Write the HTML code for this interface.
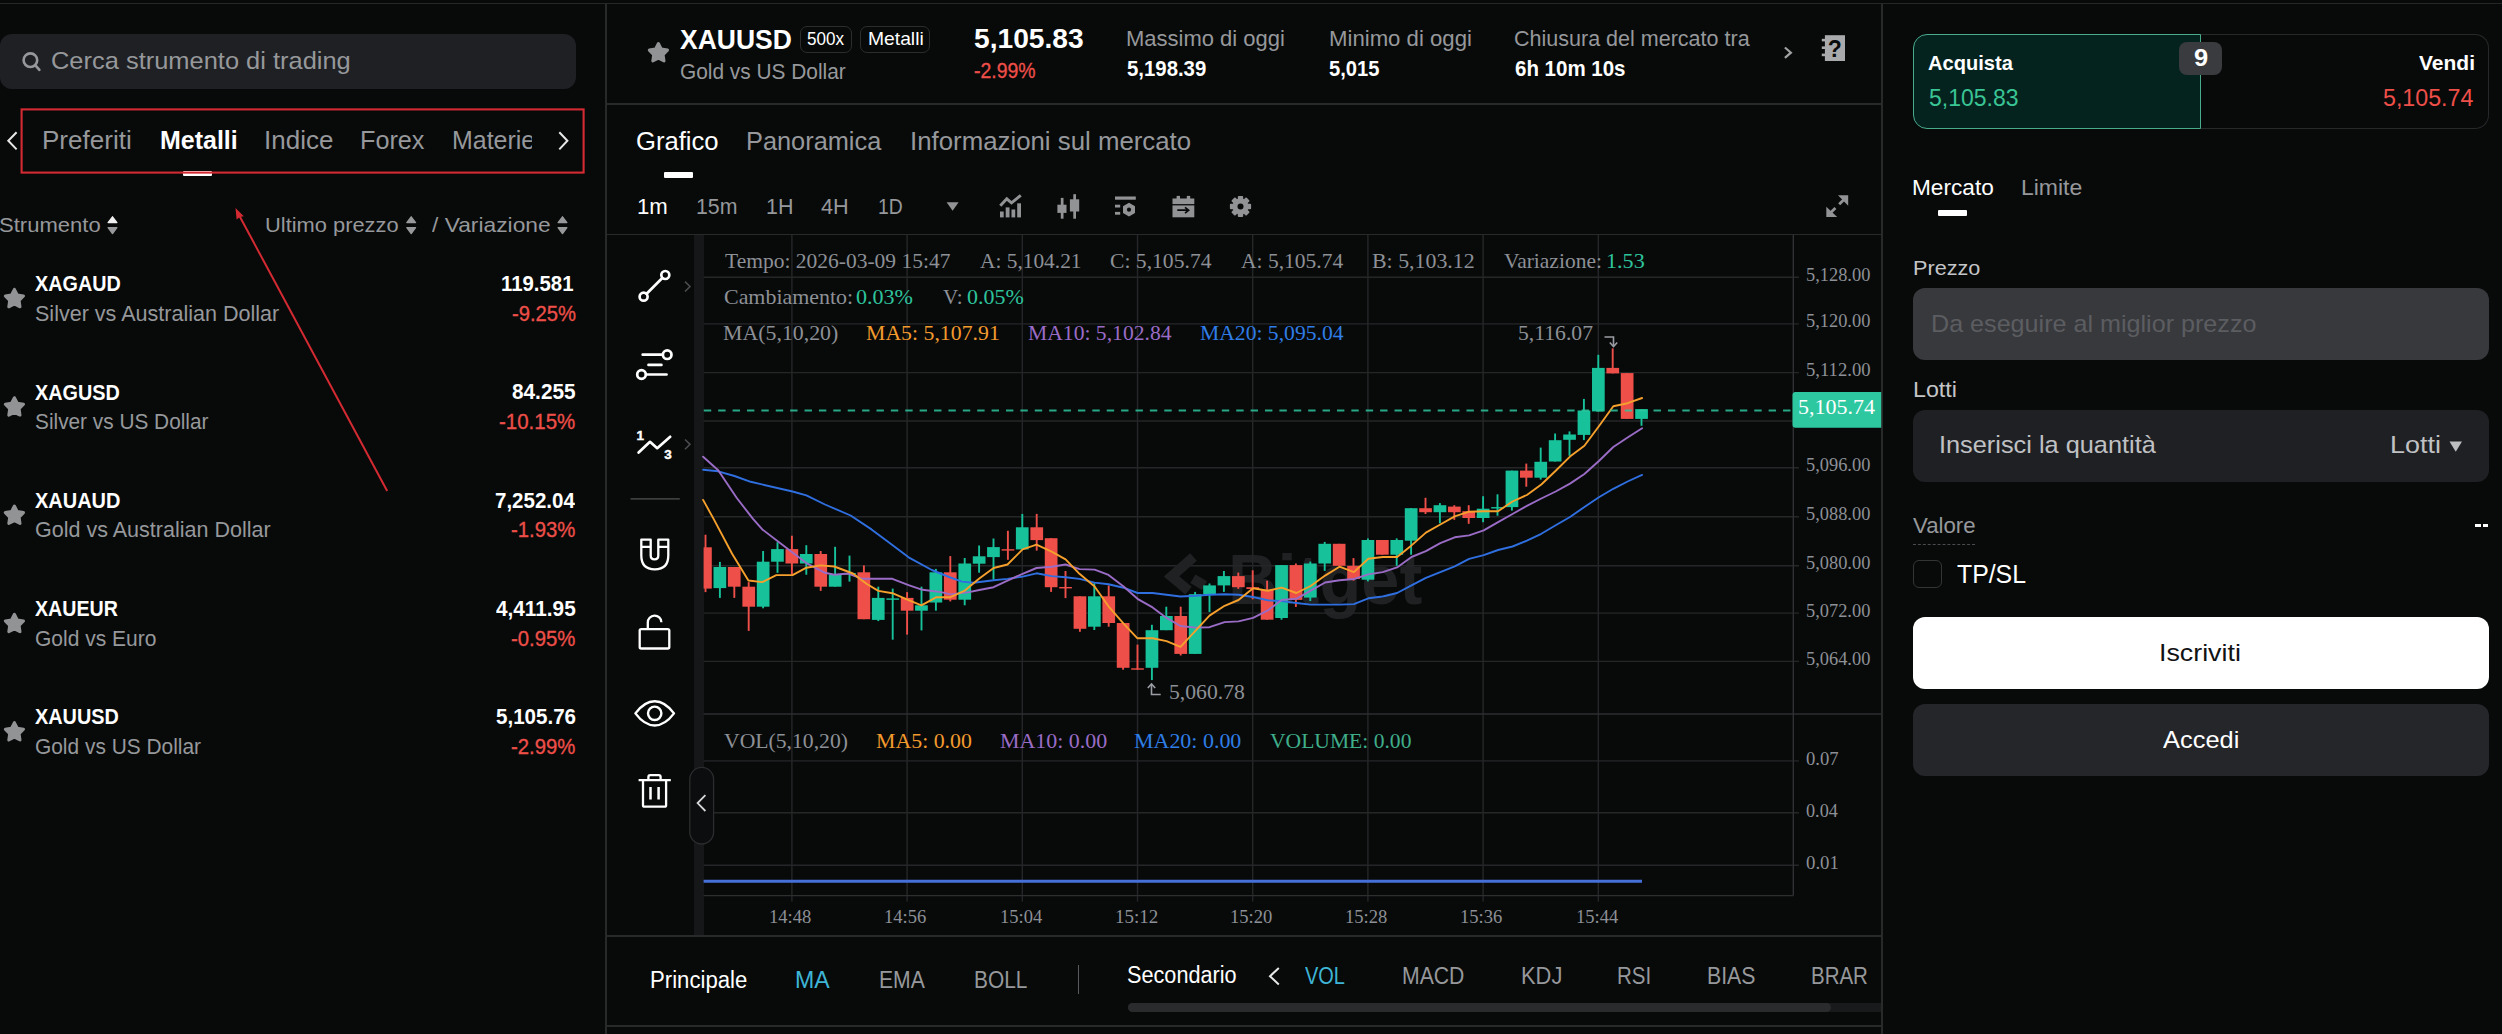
<!DOCTYPE html>
<html lang="it"><head><meta charset="utf-8"><title>XAUUSD</title>
<style>
html,body{margin:0;padding:0;background:#080a0a;}
body{width:2502px;height:1034px;position:relative;overflow:hidden;font-family:"Liberation Sans",sans-serif;}
.t{position:absolute;white-space:nowrap;transform-origin:left center;display:block;}
.b{position:absolute;box-sizing:border-box;}
svg{position:absolute;left:0;top:0;}

</style></head>
<body>
<div class="b" style="left:0.0px;top:2.9px;width:2502.0px;height:1.4px;background:#252727"></div>
<div class="b" style="left:605.3px;top:4.0px;width:1.7px;height:1030.0px;background:#282a2a"></div>
<div class="b" style="left:1881.0px;top:4.0px;width:1.7px;height:1030.0px;background:#282a2a"></div>
<div class="b" style="left:607.0px;top:103.4px;width:1274.0px;height:1.6px;background:#282a2a"></div>
<div class="b" style="left:607.0px;top:233.5px;width:1274.0px;height:1.5px;background:#282a2a"></div>
<div class="b" style="left:607.0px;top:935.4px;width:1274.0px;height:1.6px;background:#282a2a"></div>
<div class="b" style="left:607.0px;top:1025.2px;width:1274.0px;height:1.6px;background:#282a2a"></div>
<div class="b" style="left:0.0px;top:34.0px;width:576.0px;height:55.3px;background:#1f2023;border-radius:12px"></div>
<div class="b" style="left:799.7px;top:25.5px;width:52.7px;height:27.6px;border:1.3px solid #2b2c2e;border-radius:7px"></div>
<div class="b" style="left:860.3px;top:25.5px;width:69.6px;height:27.6px;border:1.3px solid #2b2c2e;border-radius:7px"></div>
<div class="b" style="left:183.0px;top:171.0px;width:29.0px;height:5.0px;background:#fff;border-radius:1px"></div>
<div class="b" style="left:664.1px;top:172.2px;width:28.7px;height:5.6px;background:#fff;border-radius:1px"></div>
<div class="b" style="left:1937.8px;top:210.0px;width:29.5px;height:5.7px;background:#fff;border-radius:1px"></div>
<div class="b" style="left:2199.0px;top:34.0px;width:290.0px;height:94.7px;border:1.3px solid #27282a;border-left:none;border-radius:0 14px 14px 0"></div>
<div class="b" style="left:1913.2px;top:34.0px;width:287.4px;height:94.7px;background:#04231f;border:1.4px solid #4aab8c;border-radius:14px 0 0 14px"></div>
<div class="b" style="left:2179.2px;top:41.5px;width:43.3px;height:33.2px;background:#3a3b3e;border-radius:8px"></div>
<div class="b" style="left:1913.2px;top:288.3px;width:575.8px;height:71.4px;background:#38393d;border-radius:12px"></div>
<div class="b" style="left:1913.2px;top:410.4px;width:575.8px;height:71.3px;background:#1f2023;border-radius:12px"></div>
<div class="b" style="left:1913.0px;top:544.0px;width:62.0px;height:1.3px;border-top:1.3px dashed #4a4b4e"></div>
<div class="b" style="left:2475.0px;top:523.8px;width:5.6px;height:3.0px;background:#fff"></div>
<div class="b" style="left:2482.6px;top:523.8px;width:5.8px;height:3.0px;background:#fff"></div>
<div class="b" style="left:1913.0px;top:560.4px;width:29.0px;height:27.4px;border:1.3px solid #333436;border-radius:6px"></div>
<div class="b" style="left:1913.0px;top:616.8px;width:576.1px;height:72.0px;background:#fff;border-radius:12px"></div>
<div class="b" style="left:1913.0px;top:703.7px;width:576.1px;height:72.0px;background:#25262a;border-radius:12px"></div>
<div class="b" style="left:1077.7px;top:965.4px;width:1.5px;height:29.0px;background:#5a5b5e"></div>
<div class="b" style="left:1128.3px;top:1002.7px;width:752.7px;height:9.3px;background:#191a1b;border-radius:5px 0 0 5px"></div>
<div class="b" style="left:1128.3px;top:1002.7px;width:703.2px;height:9.3px;background:#2a2b2d;border-radius:5px"></div>
<div class="b" style="left:693.7px;top:235.0px;width:9.9px;height:700.4px;background:#161718"></div>
<span class="t" style='left:1228.3px;top:544.7px;font:700 70px/1 "Liberation Sans", sans-serif;color:#202123;transform:scaleX(0.9796);'>Bitget</span>
<svg width="2502" height="1034" viewBox="0 0 2502 1034">
<path d="M791.9 235V901.5" stroke="#252628" stroke-width="1.4"/>
<path d="M907.1 235V901.5" stroke="#252628" stroke-width="1.4"/>
<path d="M1022.3 235V901.5" stroke="#252628" stroke-width="1.4"/>
<path d="M1137.5 235V901.5" stroke="#252628" stroke-width="1.4"/>
<path d="M1252.7 235V901.5" stroke="#252628" stroke-width="1.4"/>
<path d="M1367.9 235V901.5" stroke="#252628" stroke-width="1.4"/>
<path d="M1483.1 235V901.5" stroke="#252628" stroke-width="1.4"/>
<path d="M1598.3 235V901.5" stroke="#252628" stroke-width="1.4"/>
<path d="M703.6 277.2H1799" stroke="#252628" stroke-width="1.4"/>
<path d="M703.6 323.9H1799" stroke="#252628" stroke-width="1.4"/>
<path d="M703.6 372.6H1799" stroke="#252628" stroke-width="1.4"/>
<path d="M703.6 421.0H1799" stroke="#252628" stroke-width="1.4"/>
<path d="M703.6 467.7H1799" stroke="#252628" stroke-width="1.4"/>
<path d="M703.6 516.7H1799" stroke="#252628" stroke-width="1.4"/>
<path d="M703.6 565.7H1799" stroke="#252628" stroke-width="1.4"/>
<path d="M703.6 613.1H1799" stroke="#252628" stroke-width="1.4"/>
<path d="M703.6 661.4H1799" stroke="#252628" stroke-width="1.4"/>
<path d="M703.6 760.9H1799" stroke="#252628" stroke-width="1.4"/>
<path d="M703.6 812.7H1799" stroke="#252628" stroke-width="1.4"/>
<path d="M703.6 865.3H1799" stroke="#252628" stroke-width="1.4"/>
<path d="M703.6 714H1881" stroke="#2d2e30" stroke-width="1.4"/>
<path d="M703.6 895.6H1793.5" stroke="#2d2e30" stroke-width="1.4"/>
<path d="M1793.3 235V895.6" stroke="#303133" stroke-width="1.4"/>
<g fill="none" stroke="#202123" stroke-width="10" stroke-linejoin="miter"><path d="M1193.5 557 L1171.5 576.4 L1188.5 590.6"/><path d="M1192.9 578.7L1204.5 585.6"/></g>
<path d="M705.5 534.7V592.1" stroke="#ef4f49" stroke-width="1.9"/>
<rect x="703.6" y="547.3" width="8.2" height="41.3" fill="#ef4f49"/>
<path d="M719.9 561.9V597.9" stroke="#17c29b" stroke-width="1.9"/>
<rect x="713.5" y="567.0" width="12.7" height="21.1" fill="#17c29b"/>
<path d="M734.3 567.0V597.9" stroke="#ef4f49" stroke-width="1.9"/>
<rect x="727.9" y="567.0" width="12.7" height="19.7" fill="#ef4f49"/>
<path d="M748.7 582.1V630.9" stroke="#ef4f49" stroke-width="1.9"/>
<rect x="742.4" y="586.7" width="12.7" height="20.0" fill="#ef4f49"/>
<path d="M763.1 551.0V608.3" stroke="#17c29b" stroke-width="1.9"/>
<rect x="756.8" y="561.7" width="12.7" height="45.0" fill="#17c29b"/>
<path d="M777.5 542.2V572.8" stroke="#17c29b" stroke-width="1.9"/>
<rect x="771.1" y="549.1" width="12.7" height="12.6" fill="#17c29b"/>
<path d="M791.9 535.7V574.7" stroke="#ef4f49" stroke-width="1.9"/>
<rect x="785.5" y="549.1" width="12.7" height="14.4" fill="#ef4f49"/>
<path d="M806.3 545.2V574.7" stroke="#17c29b" stroke-width="1.9"/>
<rect x="799.9" y="554.0" width="12.7" height="9.5" fill="#17c29b"/>
<path d="M820.7 551.0V590.9" stroke="#ef4f49" stroke-width="1.9"/>
<rect x="814.4" y="554.0" width="12.7" height="32.7" fill="#ef4f49"/>
<path d="M835.1 546.8V586.7" stroke="#17c29b" stroke-width="1.9"/>
<rect x="828.8" y="574.7" width="12.7" height="12.0" fill="#17c29b"/>
<path d="M849.5 555.6V581.6" stroke="#17c29b" stroke-width="1.9"/>
<rect x="843.1" y="573.0" width="12.7" height="1.4" fill="#17c29b"/>
<path d="M863.9 565.4V619.2" stroke="#ef4f49" stroke-width="1.9"/>
<rect x="857.5" y="572.3" width="12.7" height="46.9" fill="#ef4f49"/>
<path d="M878.3 586.7V621.1" stroke="#17c29b" stroke-width="1.9"/>
<rect x="871.9" y="597.9" width="12.7" height="22.0" fill="#17c29b"/>
<path d="M892.7 588.6V639.7" stroke="#17c29b" stroke-width="1.9"/>
<rect x="886.4" y="598.4" width="12.7" height="1.4" fill="#17c29b"/>
<path d="M907.1 592.1V634.6" stroke="#ef4f49" stroke-width="1.9"/>
<rect x="900.8" y="597.9" width="12.7" height="12.8" fill="#ef4f49"/>
<path d="M921.5 586.7V630.4" stroke="#17c29b" stroke-width="1.9"/>
<rect x="915.1" y="605.3" width="12.7" height="5.4" fill="#17c29b"/>
<path d="M935.9 568.9V610.7" stroke="#17c29b" stroke-width="1.9"/>
<rect x="929.5" y="572.3" width="12.7" height="30.2" fill="#17c29b"/>
<path d="M950.3 556.1V601.4" stroke="#ef4f49" stroke-width="1.9"/>
<rect x="943.9" y="572.3" width="12.7" height="27.4" fill="#ef4f49"/>
<path d="M964.7 558.0V605.3" stroke="#17c29b" stroke-width="1.9"/>
<rect x="958.4" y="563.5" width="12.7" height="36.2" fill="#17c29b"/>
<path d="M979.1 545.5V572.7" stroke="#17c29b" stroke-width="1.9"/>
<rect x="972.8" y="556.3" width="12.7" height="7.4" fill="#17c29b"/>
<path d="M993.5 538.5V579.6" stroke="#17c29b" stroke-width="1.9"/>
<rect x="987.1" y="547.1" width="12.7" height="10.0" fill="#17c29b"/>
<path d="M1007.9 530.8V559.8" stroke="#ef4f49" stroke-width="1.9"/>
<rect x="1001.6" y="549.2" width="12.7" height="1.4" fill="#ef4f49"/>
<path d="M1022.3 513.9V549.4" stroke="#17c29b" stroke-width="1.9"/>
<rect x="1015.9" y="527.3" width="12.7" height="22.1" fill="#17c29b"/>
<path d="M1036.7 513.9V550.6" stroke="#ef4f49" stroke-width="1.9"/>
<rect x="1030.4" y="527.3" width="12.7" height="12.8" fill="#ef4f49"/>
<path d="M1051.1 538.2V591.9" stroke="#ef4f49" stroke-width="1.9"/>
<rect x="1044.8" y="538.2" width="12.7" height="49.0" fill="#ef4f49"/>
<path d="M1065.5 571.0V598.1" stroke="#ef4f49" stroke-width="1.9"/>
<rect x="1059.2" y="587.0" width="12.7" height="1.4" fill="#ef4f49"/>
<path d="M1079.9 596.3V631.8" stroke="#ef4f49" stroke-width="1.9"/>
<rect x="1073.6" y="596.3" width="12.7" height="32.5" fill="#ef4f49"/>
<path d="M1094.3 583.1V630.0" stroke="#17c29b" stroke-width="1.9"/>
<rect x="1088.0" y="596.3" width="12.7" height="30.4" fill="#17c29b"/>
<path d="M1108.7 585.4V626.7" stroke="#ef4f49" stroke-width="1.9"/>
<rect x="1102.4" y="596.3" width="12.7" height="26.7" fill="#ef4f49"/>
<path d="M1123.1 623.0V669.7" stroke="#ef4f49" stroke-width="1.9"/>
<rect x="1116.8" y="623.0" width="12.7" height="44.8" fill="#ef4f49"/>
<path d="M1137.5 644.6V669.7" stroke="#ef4f49" stroke-width="1.9"/>
<rect x="1131.2" y="668.3" width="12.7" height="1.4" fill="#ef4f49"/>
<path d="M1151.9 624.8V680.1" stroke="#17c29b" stroke-width="1.9"/>
<rect x="1145.6" y="630.2" width="12.7" height="37.6" fill="#17c29b"/>
<path d="M1166.3 606.7V630.2" stroke="#17c29b" stroke-width="1.9"/>
<rect x="1160.0" y="616.0" width="12.7" height="14.2" fill="#17c29b"/>
<path d="M1180.7 606.7V655.5" stroke="#ef4f49" stroke-width="1.9"/>
<rect x="1174.4" y="616.0" width="12.7" height="37.9" fill="#ef4f49"/>
<path d="M1195.1 591.9V653.9" stroke="#17c29b" stroke-width="1.9"/>
<rect x="1188.8" y="594.2" width="12.7" height="59.7" fill="#17c29b"/>
<path d="M1209.5 583.5V612.1" stroke="#17c29b" stroke-width="1.9"/>
<rect x="1203.2" y="585.4" width="12.7" height="8.8" fill="#17c29b"/>
<path d="M1223.9 571.0V591.9" stroke="#17c29b" stroke-width="1.9"/>
<rect x="1217.6" y="576.1" width="12.7" height="9.3" fill="#17c29b"/>
<path d="M1238.3 572.6V588.9" stroke="#ef4f49" stroke-width="1.9"/>
<rect x="1232.0" y="576.1" width="12.7" height="11.1" fill="#ef4f49"/>
<path d="M1252.7 570.3V599.3" stroke="#ef4f49" stroke-width="1.9"/>
<rect x="1246.4" y="587.2" width="12.7" height="1.8" fill="#ef4f49"/>
<path d="M1267.1 580.7V619.7" stroke="#ef4f49" stroke-width="1.9"/>
<rect x="1260.8" y="589.8" width="12.7" height="29.9" fill="#ef4f49"/>
<path d="M1281.5 565.1V619.7" stroke="#17c29b" stroke-width="1.9"/>
<rect x="1275.2" y="565.1" width="12.7" height="52.9" fill="#17c29b"/>
<path d="M1295.9 563.5V606.9" stroke="#ef4f49" stroke-width="1.9"/>
<rect x="1289.6" y="565.1" width="12.7" height="34.8" fill="#ef4f49"/>
<path d="M1310.3 561.6V601.1" stroke="#17c29b" stroke-width="1.9"/>
<rect x="1304.0" y="563.5" width="12.7" height="34.1" fill="#17c29b"/>
<path d="M1324.7 541.9V570.9" stroke="#17c29b" stroke-width="1.9"/>
<rect x="1318.4" y="543.8" width="12.7" height="19.7" fill="#17c29b"/>
<path d="M1339.1 543.8V565.8" stroke="#ef4f49" stroke-width="1.9"/>
<rect x="1332.8" y="543.8" width="12.7" height="22.0" fill="#ef4f49"/>
<path d="M1353.5 558.1V580.7" stroke="#ef4f49" stroke-width="1.9"/>
<rect x="1347.2" y="565.8" width="12.7" height="13.2" fill="#ef4f49"/>
<path d="M1367.9 538.4V581.4" stroke="#17c29b" stroke-width="1.9"/>
<rect x="1361.6" y="540.0" width="12.7" height="39.7" fill="#17c29b"/>
<path d="M1382.3 540.0V554.7" stroke="#ef4f49" stroke-width="1.9"/>
<rect x="1376.0" y="540.0" width="12.7" height="14.7" fill="#ef4f49"/>
<path d="M1396.7 538.4V565.8" stroke="#17c29b" stroke-width="1.9"/>
<rect x="1390.4" y="540.0" width="12.7" height="14.7" fill="#17c29b"/>
<path d="M1411.1 508.2V554.7" stroke="#17c29b" stroke-width="1.9"/>
<rect x="1404.8" y="508.2" width="12.7" height="32.5" fill="#17c29b"/>
<path d="M1425.5 497.8V514.0" stroke="#ef4f49" stroke-width="1.9"/>
<rect x="1419.2" y="508.2" width="12.7" height="4.0" fill="#ef4f49"/>
<path d="M1439.9 503.1V523.3" stroke="#17c29b" stroke-width="1.9"/>
<rect x="1433.6" y="505.2" width="12.7" height="7.0" fill="#17c29b"/>
<path d="M1454.3 505.2V519.8" stroke="#ef4f49" stroke-width="1.9"/>
<rect x="1448.0" y="506.6" width="12.7" height="5.6" fill="#ef4f49"/>
<path d="M1468.7 505.2V523.8" stroke="#ef4f49" stroke-width="1.9"/>
<rect x="1462.4" y="511.2" width="12.7" height="6.8" fill="#ef4f49"/>
<path d="M1483.1 496.2V522.2" stroke="#17c29b" stroke-width="1.9"/>
<rect x="1476.8" y="508.7" width="12.7" height="9.3" fill="#17c29b"/>
<path d="M1497.5 494.3V515.7" stroke="#17c29b" stroke-width="1.9"/>
<rect x="1491.2" y="507.1" width="12.7" height="1.4" fill="#17c29b"/>
<path d="M1511.9 470.6V510.6" stroke="#17c29b" stroke-width="1.9"/>
<rect x="1505.6" y="470.6" width="12.7" height="36.5" fill="#17c29b"/>
<path d="M1526.3 463.6V486.7" stroke="#ef4f49" stroke-width="1.9"/>
<rect x="1520.0" y="470.6" width="12.7" height="7.1" fill="#ef4f49"/>
<path d="M1540.7 447.6V479.6" stroke="#17c29b" stroke-width="1.9"/>
<rect x="1534.4" y="461.8" width="12.7" height="15.9" fill="#17c29b"/>
<path d="M1555.1 433.5V461.5" stroke="#17c29b" stroke-width="1.9"/>
<rect x="1548.8" y="440.2" width="12.7" height="21.3" fill="#17c29b"/>
<path d="M1569.5 431.4V455.8" stroke="#17c29b" stroke-width="1.9"/>
<rect x="1563.2" y="434.5" width="12.7" height="5.3" fill="#17c29b"/>
<path d="M1583.9 398.9V440.1" stroke="#17c29b" stroke-width="1.9"/>
<rect x="1577.6" y="410.5" width="12.7" height="24.4" fill="#17c29b"/>
<path d="M1598.3 354.8V411.4" stroke="#17c29b" stroke-width="1.9"/>
<rect x="1592.0" y="367.9" width="12.7" height="43.5" fill="#17c29b"/>
<path d="M1612.7 348.4V373.4" stroke="#ef4f49" stroke-width="1.9"/>
<rect x="1606.4" y="367.9" width="12.7" height="5.5" fill="#ef4f49"/>
<path d="M1627.1 373.1V418.9" stroke="#ef4f49" stroke-width="1.9"/>
<rect x="1620.8" y="373.1" width="12.7" height="45.8" fill="#ef4f49"/>
<path d="M1641.5 409.1V425.8" stroke="#17c29b" stroke-width="1.9"/>
<rect x="1635.2" y="409.1" width="12.7" height="9.8" fill="#17c29b"/>
<polyline points="703.1,469.7 718.2,471.3 734.5,476 750.7,481.8 792.5,491.5 806.4,495.3 825,504.5 850.6,515.5 871.5,529.4 890,543.3 908.6,557.3 931.8,570 950.4,577.5 962,581.6 973.6,582.8 993.6,580.3 1007.5,578.9 1022.6,576.6 1036.5,573.3 1051.6,576.1 1065.6,577.3 1079.5,578.9 1094.6,582.6 1108.5,584.2 1123.6,587.7 1137.5,593 1152.6,593 1166.5,594.7 1180.5,596.5 1195.6,595.8 1209.5,594.7 1224.6,594.2 1238.5,594.7 1253.1,597 1267.8,600.3 1281.7,601.1 1296.3,603 1310.7,604.6 1325.1,604.6 1339.5,604.6 1353.9,604.1 1368.3,598.3 1382.7,596.5 1397.1,593 1411.5,585.3 1425.9,577.9 1440.3,572.1 1454.7,566.3 1469.1,558.8 1483.7,555.1 1498.1,550 1512.5,546.5 1526.9,540.7 1541.3,533.8 1555.7,525.3 1570,517 1584.4,507 1598.9,497.2 1613.3,488.8 1627.6,481.5 1642.1,474.9" fill="none" stroke="#2f6fe0" stroke-width="1.9" stroke-linejoin="round" stroke-linecap="round"/>
<polyline points="703.1,456.7 718.2,470.2 736.8,498 753,518.9 762.3,529.4 787.9,549.1 806.4,563.1 825,572.8 834.3,574.7 848.2,573.5 862.2,578.8 892.4,578.8 908.6,585.1 922.5,589.8 941.1,592.1 950.4,594.4 969,592.1 979.3,590 993.6,587.2 1007.5,580.7 1022.6,573.8 1036.5,568 1051.6,566.8 1065.6,564.5 1079.5,569.1 1094.6,569.6 1108.5,574.9 1123.6,586.5 1137.5,598.8 1152.6,607.4 1166.5,617.9 1180.5,626 1195.6,627.6 1209.5,627.2 1224.6,622.1 1238.5,621.4 1253.1,617.9 1267.8,610.4 1281.7,599.9 1296.3,598.8 1310.7,590.7 1325.1,582.5 1339.5,580.2 1353.9,579 1368.3,574.4 1382.7,572.1 1397.1,567.4 1411.5,557 1425.9,551.2 1440.3,543.1 1454.7,537.3 1469.1,535.4 1483.7,530.3 1498.1,522.2 1512.5,514 1526.9,505.9 1541.3,498.5 1555.7,491.5 1570,483.6 1584.4,474 1598.9,461 1613.3,447 1627.6,437.5 1642.1,428.3" fill="none" stroke="#9a6cc6" stroke-width="1.9" stroke-linejoin="round" stroke-linecap="round"/>
<polyline points="703.1,499.9 713.6,518.9 732.1,553.8 748.4,580.5 762.3,582.1 776.3,575.1 792.5,575.1 806.4,567.7 820.4,565.4 834.3,566.5 852.9,573.5 866.8,584 878.4,590.9 892.4,593.2 908.6,600.2 921.4,605.3 936.5,597.2 950.4,597.2 964.3,590.9 979.3,578.5 993.6,568 1007.5,564.5 1022.6,549.4 1036.5,544.7 1051.6,551.7 1065.6,559.4 1079.5,573.8 1094.6,586.5 1108.5,606.3 1123.6,623.7 1137.5,638.3 1152.6,638.3 1166.5,641.1 1180.5,646.9 1195.6,630.7 1209.5,615.6 1224.6,605.8 1238.5,600 1253.1,588.2 1267.8,590.7 1281.7,587.6 1296.3,593 1310.7,586 1325.1,575.6 1339.5,566.7 1353.9,572.1 1368.3,558.8 1382.7,557 1397.1,557 1411.5,545.4 1425.9,532.6 1440.3,524.5 1454.7,516.4 1469.1,511.7 1483.7,511.2 1498.1,511.2 1512.5,501.5 1526.9,495 1541.3,484.5 1555.7,470.8 1570,456.6 1584.4,445.7 1598.9,426.2 1613.3,406.2 1627.6,403.2 1642.1,398" fill="none" stroke="#f5a02c" stroke-width="1.9" stroke-linejoin="round" stroke-linecap="round"/>
<path d="M703.8 410.5H1793" stroke="#2ec49c" stroke-opacity="0.85" stroke-width="2.1" stroke-dasharray="7.4 6.99"/>
<path d="M703.6 881.3H1642" stroke="#4470d8" stroke-width="3"/>
<path d="M1795.5 392H1881.2V427.7H1795.5Q1792.5 427.7 1792.5 424.7V395Q1792.5 392 1795.5 392Z" fill="#2ec8a0"/>
<g fill="none" stroke="#9a9da3" stroke-width="1.6"><path d="M1604.5 337H1613.5V346"/><path d="M1609.8 342.5L1613.5 346.5L1617.2 342.5"/></g>
<g fill="none" stroke="#9a9da3" stroke-width="1.6"><path d="M1160.7 694.5H1151.5V684.5"/><path d="M1147.8 688L1151.5 684L1155.2 688"/></g>
<polygon points="658.4,43.5 661.3,49.1 667.5,50.1 663.1,54.6 664.0,60.9 658.4,58.1 652.8,60.9 653.7,54.6 649.3,50.1 655.5,49.1" fill="#929395" stroke="#929395" stroke-width="3" stroke-linejoin="round"/>
<polygon points="14.4,289.4 17.3,295.0 23.5,296.0 19.1,300.5 20.0,306.8 14.4,304.0 8.8,306.8 9.7,300.5 5.3,296.0 11.5,295.0" fill="#929395" stroke="#929395" stroke-width="3" stroke-linejoin="round"/>
<polygon points="14.4,397.7 17.3,403.3 23.5,404.3 19.1,408.8 20.0,415.1 14.4,412.3 8.8,415.1 9.7,408.8 5.3,404.3 11.5,403.3" fill="#929395" stroke="#929395" stroke-width="3" stroke-linejoin="round"/>
<polygon points="14.4,506.0 17.3,511.6 23.5,512.6 19.1,517.1 20.0,523.4 14.4,520.6 8.8,523.4 9.7,517.1 5.3,512.6 11.5,511.6" fill="#929395" stroke="#929395" stroke-width="3" stroke-linejoin="round"/>
<polygon points="14.4,614.3 17.3,619.9 23.5,620.9 19.1,625.4 20.0,631.7 14.4,628.9 8.8,631.7 9.7,625.4 5.3,620.9 11.5,619.9" fill="#929395" stroke="#929395" stroke-width="3" stroke-linejoin="round"/>
<polygon points="14.4,722.6 17.3,728.2 23.5,729.2 19.1,733.7 20.0,740.0 14.4,737.2 8.8,740.0 9.7,733.7 5.3,729.2 11.5,728.2" fill="#929395" stroke="#929395" stroke-width="3" stroke-linejoin="round"/>
<g fill="none" stroke="#96989b" stroke-width="2.6" stroke-linecap="round"><circle cx="30.4" cy="60.2" r="6.8"/><path d="M35.4 65.4L39.4 69.9"/></g>
<g fill="none" stroke="#e8e8e8" stroke-width="2"><path d="M16.6 132.2L8.3 140.8L16.6 149.4"/><path d="M559.3 132.2L567.4 140.8L559.3 149.4"/></g>
<path d="M108.1 222.6L112.5 216.8L116.9 222.6Z" fill="#f0f0f0" stroke="#f0f0f0" stroke-width="1.3" stroke-linejoin="round"/><path d="M108.1 227.7L112.5 233.5L116.9 227.7Z" fill="#98999b" stroke="#98999b" stroke-width="1.3" stroke-linejoin="round"/>
<path d="M406.8 222.6L411.2 216.8L415.59999999999997 222.6Z" fill="#98999b" stroke="#98999b" stroke-width="1.3" stroke-linejoin="round"/><path d="M406.8 227.7L411.2 233.5L415.59999999999997 227.7Z" fill="#98999b" stroke="#98999b" stroke-width="1.3" stroke-linejoin="round"/>
<path d="M558.1 222.6L562.5 216.8L566.9 222.6Z" fill="#98999b" stroke="#98999b" stroke-width="1.3" stroke-linejoin="round"/><path d="M558.1 227.7L562.5 233.5L566.9 227.7Z" fill="#98999b" stroke="#98999b" stroke-width="1.3" stroke-linejoin="round"/>
<path d="M1784.9 47.5L1790.9 52.7L1784.9 57.9" fill="none" stroke="#a0a1a3" stroke-width="2.2"/>
<g fill="#a9aaab"><rect x="1824.9" y="35.2" width="20.1" height="25.8"/><rect x="1821.8" y="38.8" width="4" height="2.6"/><rect x="1821.8" y="46.4" width="4" height="2.6"/><rect x="1821.8" y="53.6" width="4" height="2.6"/></g>
<text x="1834.9" y="56.6" font-family="Liberation Sans, sans-serif" font-weight="700" font-size="23" text-anchor="middle" fill="#0a0b0b">?</text>
<path d="M946.6 202.2H958.6L952.6 210.8Z" fill="#929395"/>
<g fill="#929395"><rect x="1000" y="211.5" width="3.7" height="5.9"/><rect x="1005.7" y="207.4" width="3.8" height="10"/><rect x="1011.5" y="209.5" width="3.7" height="7.9"/><rect x="1017.2" y="203.3" width="3.8" height="14.1"/></g><path d="M1000.3 205.8L1006.8 198.8L1011.5 202.8L1020.8 195.3" fill="none" stroke="#929395" stroke-width="2.9"/>
<g fill="#929395"><rect x="1057.4" y="204.7" width="9.1" height="8.2"/><rect x="1060.8" y="197.9" width="2.7" height="20.8"/><rect x="1069.9" y="199.3" width="9.3" height="12.2"/><rect x="1073.3" y="194.2" width="2.7" height="24.5"/></g>
<g fill="#929395"><rect x="1115" y="196.5" width="20.8" height="3.2"/><rect x="1115" y="204.7" width="5.2" height="2.8"/><rect x="1115" y="211.9" width="5.2" height="2.8"/><polygon points="1135.0,213.1 1129.0,216.6 1123.0,213.1 1123.0,206.2 1129.0,202.8 1135.0,206.2"/></g><circle cx="1129" cy="209.7" r="2.1" fill="#080a0a"/>
<g fill="#929395"><rect x="1176.6" y="195.9" width="3.4" height="3.4"/><rect x="1186.8" y="195.9" width="3.4" height="3.4"/><rect x="1172.5" y="198.5" width="21.8" height="5.6"/><rect x="1172.5" y="205.4" width="21.8" height="11.9"/></g><path d="M1177.3 210.2H1187.5M1185 207.3L1188.6 210.2L1185 213.1" fill="none" stroke="#080a0a" stroke-width="1.7"/>
<g fill="#929395"><rect x="1237.8" y="195.9" width="5.4" height="21.2" rx="1" transform="rotate(0 1240.5 206.5)"/><rect x="1237.8" y="195.9" width="5.4" height="21.2" rx="1" transform="rotate(45 1240.5 206.5)"/><rect x="1237.8" y="195.9" width="5.4" height="21.2" rx="1" transform="rotate(90 1240.5 206.5)"/><rect x="1237.8" y="195.9" width="5.4" height="21.2" rx="1" transform="rotate(135 1240.5 206.5)"/><circle cx="1240.5" cy="206.5" r="8"/></g><circle cx="1240.5" cy="206.5" r="3" fill="#080a0a"/>
<g fill="#929395"><path d="M1838 195.3H1848.2V205.8Z"/><path d="M1826.3 206.8V217H1837.2Z"/></g><path d="M1839.2 204.3L1844 199.5M1830.5 212.8L1835.4 208" stroke="#929395" stroke-width="2.8" fill="none"/>
<g fill="none" stroke="#fff" stroke-width="2.7" stroke-linecap="round"><circle cx="643.6" cy="296.7" r="4"/><circle cx="665.3" cy="275" r="4"/><path d="M646.6 293.7L662.3 278"/><path d="M642.7 354.7H662.6"/><circle cx="667.2" cy="354.7" r="4.3"/><path d="M648.5 364.9H661.4"/><circle cx="641.5" cy="374.5" r="4.3"/><path d="M646.2 374.5H666.5"/><path d="M638.6 452.6L650 441.8L657.2 448.2L670.2 436.8" stroke-linejoin="round"/></g>
<text x="636.6" y="439.6" font-family="Liberation Sans, sans-serif" font-weight="700" font-size="13.5" fill="#fff" stroke="#fff" stroke-width="0.4">1</text>
<text x="664.3" y="459.3" font-family="Liberation Sans, sans-serif" font-weight="700" font-size="13.5" fill="#fff" stroke="#fff" stroke-width="0.4">3</text>
<g fill="none" stroke="#4a4b4d" stroke-width="1.6"><path d="M685 281.6L690 286.5L685 291.5"/><path d="M685 439.5L690 444.3L685 449.2"/></g>
<path d="M630.5 498.9H679.8" stroke="#3c3d3f" stroke-width="1.6"/>
<g fill="none" stroke="#fff" stroke-width="2.3" stroke-linejoin="round"><path d="M641.3 539.7H650.7V555.5Q650.7 559.4 654.5 559.4Q658.3 559.4 658.3 555.5V539.7H668.3V555.5Q668.3 569.3 654.8 569.3Q641.3 569.3 641.3 555.5Z"/><path d="M641.3 546.9H650.7M658.3 546.9H668.3"/></g>
<g fill="none" stroke="#fff" stroke-width="2.3" stroke-linejoin="round"><rect x="639.7" y="629.1" width="29.6" height="19.4" rx="1.5"/><path d="M647.8 628.5V622.6A6.8 6.8 0 0 1 661.4 622.2"/></g>
<g fill="none" stroke="#fff" stroke-width="2.4"><path d="M635.4 713.4Q644.5 701.3 654.7 701.3Q664.9 701.3 674 713.4Q664.9 725.5 654.7 725.5Q644.5 725.5 635.4 713.4Z" stroke-linejoin="round"/><circle cx="654.7" cy="713.3" r="6.7"/></g>
<g fill="none" stroke="#fff" stroke-width="2.3" stroke-linejoin="round"><path d="M638.6 780.2H670.8"/><path d="M648.4 779.6V777Q648.4 775.2 650.2 775.2H658.8Q660.6 775.2 660.6 777V779.6"/><path d="M643 781V805.2Q643 806.7 644.5 806.7H664.6Q666.1 806.7 666.1 805.2V781"/><path d="M650.5 787V799.6M658.6 787V799.6" stroke-width="2.5"/></g>
<rect x="689.8" y="767.4" width="23.8" height="76.6" rx="11.9" fill="#0c0d0e" stroke="#2b2c2e" stroke-width="1.3"/><path d="M705.4 795.2L697.6 803.1L705.4 811" fill="none" stroke="#d8d8d8" stroke-width="1.8"/>
<path d="M1278.8 968L1270 976.2L1278.8 984.4" fill="none" stroke="#e8e8e8" stroke-width="2"/>
<path d="M2449.5 441.5H2462L2455.75 451.8Z" fill="#bdbec0"/>
</svg>
<span class="t" style='left:51.4px;top:49.2px;font:400 24.6px/1 "Liberation Sans", sans-serif;color:#96989b;transform:scaleX(1.0343);'>Cerca strumento di trading</span>
<span class="t" style='left:41.9px;top:127.7px;font:400 25.2px/1 "Liberation Sans", sans-serif;color:#96989b;transform:scaleX(1.0334);'>Preferiti</span>
<span class="t" style='left:159.6px;top:127.5px;font:700 25.3px/1 "Liberation Sans", sans-serif;color:#ffffff;transform:scaleX(0.9875);'>Metalli</span>
<span class="t" style='left:263.8px;top:127.5px;font:400 25.3px/1 "Liberation Sans", sans-serif;color:#96989b;transform:scaleX(1.0274);'>Indice</span>
<span class="t" style='left:359.9px;top:127.5px;font:400 25.3px/1 "Liberation Sans", sans-serif;color:#96989b;transform:scaleX(0.9969);'>Forex</span>
<span class="t" style='left:451.9px;top:127.5px;font:400 25.3px/1 "Liberation Sans", sans-serif;color:#96989b;transform:scaleX(0.9867);clip-path:polygon(0 -10px,81.0px -10px,81.0px 50px,0 50px);'>Materie prime</span>
<span class="t" style='left:-1.3px;top:214.8px;font:400 20.6px/1 "Liberation Sans", sans-serif;color:#96989b;transform:scaleX(1.0699);'>Strumento</span>
<span class="t" style='left:265.2px;top:214.8px;font:400 20.6px/1 "Liberation Sans", sans-serif;color:#96989b;transform:scaleX(1.0613);'>Ultimo prezzo</span>
<span class="t" style='left:431.9px;top:214.8px;font:400 20.6px/1 "Liberation Sans", sans-serif;color:#96989b;transform:scaleX(1.1068);'>/ Variazione</span>
<span class="t" style='left:35.2px;top:273.2px;font:700 21.6px/1 "Liberation Sans", sans-serif;color:#ffffff;transform:scaleX(0.9163);'>XAGAUD</span>
<span class="t" style='left:34.9px;top:302.7px;font:400 21.7px/1 "Liberation Sans", sans-serif;color:#96989b;transform:scaleX(0.9933);'>Silver vs Australian Dollar</span>
<span class="t" style='left:501.2px;top:273.1px;font:700 21.8px/1 "Liberation Sans", sans-serif;color:#ffffff;transform:scaleX(0.9341);'>119.581</span>
<span class="t" style='left:511.5px;top:302.8px;font:400 21.6px/1 "Liberation Sans", sans-serif;color:#ee4f49;transform:scaleX(0.9365);-webkit-text-stroke:0.3px #ee4f49;'>-9.25%</span>
<span class="t" style='left:35.2px;top:381.5px;font:700 21.6px/1 "Liberation Sans", sans-serif;color:#ffffff;transform:scaleX(0.9175);'>XAGUSD</span>
<span class="t" style='left:34.9px;top:411.0px;font:400 21.7px/1 "Liberation Sans", sans-serif;color:#96989b;transform:scaleX(0.9597);'>Silver vs US Dollar</span>
<span class="t" style='left:512.1px;top:381.4px;font:700 21.8px/1 "Liberation Sans", sans-serif;color:#ffffff;transform:scaleX(0.9536);'>84.255</span>
<span class="t" style='left:499.4px;top:411.1px;font:400 21.6px/1 "Liberation Sans", sans-serif;color:#ee4f49;transform:scaleX(0.9475);-webkit-text-stroke:0.3px #ee4f49;'>-10.15%</span>
<span class="t" style='left:35.2px;top:489.8px;font:700 21.6px/1 "Liberation Sans", sans-serif;color:#ffffff;transform:scaleX(0.9252);'>XAUAUD</span>
<span class="t" style='left:34.9px;top:519.3px;font:400 21.7px/1 "Liberation Sans", sans-serif;color:#96989b;transform:scaleX(0.9925);'>Gold vs Australian Dollar</span>
<span class="t" style='left:495.1px;top:489.7px;font:700 21.8px/1 "Liberation Sans", sans-serif;color:#ffffff;transform:scaleX(0.9406);'>7,252.04</span>
<span class="t" style='left:511.2px;top:519.4px;font:400 21.6px/1 "Liberation Sans", sans-serif;color:#ee4f49;transform:scaleX(0.9410);-webkit-text-stroke:0.3px #ee4f49;'>-1.93%</span>
<span class="t" style='left:35.2px;top:598.1px;font:700 21.6px/1 "Liberation Sans", sans-serif;color:#ffffff;transform:scaleX(0.9081);'>XAUEUR</span>
<span class="t" style='left:35.0px;top:627.6px;font:400 21.7px/1 "Liberation Sans", sans-serif;color:#96989b;transform:scaleX(0.9678);'>Gold vs Euro</span>
<span class="t" style='left:495.9px;top:598.0px;font:700 21.8px/1 "Liberation Sans", sans-serif;color:#ffffff;transform:scaleX(0.9527);'>4,411.95</span>
<span class="t" style='left:511.2px;top:627.7px;font:400 21.6px/1 "Liberation Sans", sans-serif;color:#ee4f49;transform:scaleX(0.9410);-webkit-text-stroke:0.3px #ee4f49;'>-0.95%</span>
<span class="t" style='left:35.2px;top:706.4px;font:700 21.6px/1 "Liberation Sans", sans-serif;color:#ffffff;transform:scaleX(0.9189);'>XAUUSD</span>
<span class="t" style='left:35.0px;top:735.9px;font:400 21.7px/1 "Liberation Sans", sans-serif;color:#96989b;transform:scaleX(0.9633);'>Gold vs US Dollar</span>
<span class="t" style='left:495.8px;top:706.3px;font:700 21.8px/1 "Liberation Sans", sans-serif;color:#ffffff;transform:scaleX(0.9436);'>5,105.76</span>
<span class="t" style='left:511.2px;top:736.0px;font:400 21.6px/1 "Liberation Sans", sans-serif;color:#ee4f49;transform:scaleX(0.9410);-webkit-text-stroke:0.3px #ee4f49;'>-2.99%</span>
<span class="t" style='left:680.3px;top:24.8px;font:700 28.4px/1 "Liberation Sans", sans-serif;color:#ffffff;transform:scaleX(0.9329);'>XAUUSD</span>
<span class="t" style='left:807.2px;top:30.0px;font:400 18.6px/1 "Liberation Sans", sans-serif;color:#ffffff;transform:scaleX(0.9184);'>500x</span>
<span class="t" style='left:867.5px;top:30.0px;font:400 18.6px/1 "Liberation Sans", sans-serif;color:#ffffff;transform:scaleX(1.0366);'>Metalli</span>
<span class="t" style='left:679.9px;top:61.8px;font:400 21.3px/1 "Liberation Sans", sans-serif;color:#96989b;transform:scaleX(0.9792);'>Gold vs US Dollar</span>
<span class="t" style='left:973.6px;top:25.1px;font:700 28px/1 "Liberation Sans", sans-serif;color:#ffffff;transform:scaleX(1.0062);'>5,105.83</span>
<span class="t" style='left:973.7px;top:61.3px;font:400 21.4px/1 "Liberation Sans", sans-serif;color:#ee4f49;transform:scaleX(0.9086);-webkit-text-stroke:0.3px #ee4f49;'>-2.99%</span>
<span class="t" style='left:1126.1px;top:28.8px;font:400 21.3px/1 "Liberation Sans", sans-serif;color:#96989b;transform:scaleX(1.0324);'>Massimo di oggi</span>
<span class="t" style='left:1126.6px;top:58.0px;font:700 21.2px/1 "Liberation Sans", sans-serif;color:#ffffff;transform:scaleX(0.9612);'>5,198.39</span>
<span class="t" style='left:1328.5px;top:28.8px;font:400 21.3px/1 "Liberation Sans", sans-serif;color:#96989b;transform:scaleX(1.0410);'>Minimo di oggi</span>
<span class="t" style='left:1329.1px;top:58.0px;font:700 21.2px/1 "Liberation Sans", sans-serif;color:#ffffff;transform:scaleX(0.9515);'>5,015</span>
<span class="t" style='left:1513.9px;top:28.8px;font:400 21.3px/1 "Liberation Sans", sans-serif;color:#96989b;transform:scaleX(1.0104);'>Chiusura del mercato tra</span>
<span class="t" style='left:1514.5px;top:58.0px;font:700 21.2px/1 "Liberation Sans", sans-serif;color:#ffffff;transform:scaleX(0.9673);'>6h 10m 10s</span>
<span class="t" style='left:636.3px;top:128.6px;font:400 25px/1 "Liberation Sans", sans-serif;color:#ffffff;transform:scaleX(1.0253);'>Grafico</span>
<span class="t" style='left:746.1px;top:128.6px;font:400 25px/1 "Liberation Sans", sans-serif;color:#96989b;transform:scaleX(1.0138);'>Panoramica</span>
<span class="t" style='left:910.4px;top:128.6px;font:400 25px/1 "Liberation Sans", sans-serif;color:#96989b;transform:scaleX(1.0324);'>Informazioni sul mercato</span>
<span class="t" style='left:636.9px;top:195.5px;font:400 21.6px/1 "Liberation Sans", sans-serif;color:#ffffff;transform:scaleX(1.0274);'>1m</span>
<span class="t" style='left:696.3px;top:195.5px;font:400 21.6px/1 "Liberation Sans", sans-serif;color:#96989b;transform:scaleX(0.9862);'>15m</span>
<span class="t" style='left:766.2px;top:195.5px;font:400 21.6px/1 "Liberation Sans", sans-serif;color:#96989b;transform:scaleX(0.9944);'>1H</span>
<span class="t" style='left:821.4px;top:195.5px;font:400 21.6px/1 "Liberation Sans", sans-serif;color:#96989b;transform:scaleX(1.0037);'>4H</span>
<span class="t" style='left:877.9px;top:195.5px;font:400 21.6px/1 "Liberation Sans", sans-serif;color:#96989b;transform:scaleX(0.8969);'>1D</span>
<span class="t" style='left:724.9px;top:250.9px;font:400 21.4px/1 "Liberation Serif", serif;color:#8d9096;transform:scaleX(1.0051);'>Tempo: 2026-03-09 15:47</span>
<span class="t" style='left:980.2px;top:250.9px;font:400 21.4px/1 "Liberation Serif", serif;color:#8d9096;transform:scaleX(0.9991);'>A: 5,104.21</span>
<span class="t" style='left:1110.4px;top:250.9px;font:400 21.4px/1 "Liberation Serif", serif;color:#8d9096;transform:scaleX(1.0108);'>C: 5,105.74</span>
<span class="t" style='left:1241.1px;top:250.9px;font:400 21.4px/1 "Liberation Serif", serif;color:#8d9096;transform:scaleX(1.0060);'>A: 5,105.74</span>
<span class="t" style='left:1371.5px;top:250.9px;font:400 21.4px/1 "Liberation Serif", serif;color:#8d9096;transform:scaleX(1.0227);'>B: 5,103.12</span>
<span class="t" style='left:1503.8px;top:250.9px;font:400 21.4px/1 "Liberation Serif", serif;color:#8d9096;transform:scaleX(1.0051);'>Variazione:</span>
<span class="t" style='left:1605.5px;top:250.9px;font:400 21.4px/1 "Liberation Serif", serif;color:#2ec49c;transform:scaleX(1.0335);'>1.53</span>
<span class="t" style='left:723.5px;top:286.6px;font:400 21.4px/1 "Liberation Serif", serif;color:#8d9096;transform:scaleX(1.0256);'>Cambiamento:</span>
<span class="t" style='left:856.2px;top:286.6px;font:400 21.4px/1 "Liberation Serif", serif;color:#2ec49c;transform:scaleX(1.0311);'>0.03%</span>
<span class="t" style='left:943.1px;top:286.6px;font:400 21.4px/1 "Liberation Serif", serif;color:#8d9096;transform:scaleX(0.9835);'>V:</span>
<span class="t" style='left:966.8px;top:286.6px;font:400 21.4px/1 "Liberation Serif", serif;color:#2ec49c;transform:scaleX(1.0274);'>0.05%</span>
<span class="t" style='left:723.4px;top:322.6px;font:400 21.4px/1 "Liberation Serif", serif;color:#8d9096;transform:scaleX(1.0216);'>MA(5,10,20)</span>
<span class="t" style='left:866.4px;top:322.6px;font:400 21.4px/1 "Liberation Serif", serif;color:#f39a2d;transform:scaleX(1.0189);'>MA5: 5,107.91</span>
<span class="t" style='left:1028.1px;top:322.6px;font:400 21.4px/1 "Liberation Serif", serif;color:#9a6cc6;transform:scaleX(1.0106);'>MA10: 5,102.84</span>
<span class="t" style='left:1200.1px;top:322.6px;font:400 21.4px/1 "Liberation Serif", serif;color:#2f7de6;transform:scaleX(1.0106);'>MA20: 5,095.04</span>
<span class="t" style='left:1517.8px;top:322.9px;font:400 21px/1 "Liberation Serif", serif;color:#8d9096;transform:scaleX(1.0308);'>5,116.07</span>
<span class="t" style='left:1169.1px;top:681.6px;font:400 21px/1 "Liberation Serif", serif;color:#8d9096;transform:scaleX(1.0316);'>5,060.78</span>
<span class="t" style='left:724.4px;top:731.0px;font:400 21.4px/1 "Liberation Serif", serif;color:#8d9096;transform:scaleX(1.0129);'>VOL(5,10,20)</span>
<span class="t" style='left:875.9px;top:731.0px;font:400 21.4px/1 "Liberation Serif", serif;color:#f39a2d;transform:scaleX(1.0216);'>MA5: 0.00</span>
<span class="t" style='left:999.7px;top:731.0px;font:400 21.4px/1 "Liberation Serif", serif;color:#9a6cc6;transform:scaleX(1.0254);'>MA10: 0.00</span>
<span class="t" style='left:1133.7px;top:731.0px;font:400 21.4px/1 "Liberation Serif", serif;color:#2f7de6;transform:scaleX(1.0264);'>MA20: 0.00</span>
<span class="t" style='left:1270.3px;top:731.0px;font:400 21.4px/1 "Liberation Serif", serif;color:#3fae8a;transform:scaleX(1.0087);'>VOLUME: 0.00</span>
<span class="t" style='left:1805.7px;top:265.7px;font:400 18px/1 "Liberation Serif", serif;color:#8d9096;transform:scaleX(1.0213);'>5,128.00</span>
<span class="t" style='left:1805.7px;top:312.4px;font:400 18px/1 "Liberation Serif", serif;color:#8d9096;transform:scaleX(1.0213);'>5,120.00</span>
<span class="t" style='left:1805.7px;top:361.1px;font:400 18px/1 "Liberation Serif", serif;color:#8d9096;transform:scaleX(1.0361);'>5,112.00</span>
<span class="t" style='left:1805.7px;top:456.2px;font:400 18px/1 "Liberation Serif", serif;color:#8d9096;transform:scaleX(1.0213);'>5,096.00</span>
<span class="t" style='left:1805.7px;top:505.2px;font:400 18px/1 "Liberation Serif", serif;color:#8d9096;transform:scaleX(1.0213);'>5,088.00</span>
<span class="t" style='left:1805.7px;top:554.2px;font:400 18px/1 "Liberation Serif", serif;color:#8d9096;transform:scaleX(1.0213);'>5,080.00</span>
<span class="t" style='left:1805.7px;top:601.6px;font:400 18px/1 "Liberation Serif", serif;color:#8d9096;transform:scaleX(1.0213);'>5,072.00</span>
<span class="t" style='left:1805.7px;top:649.9px;font:400 18px/1 "Liberation Serif", serif;color:#8d9096;transform:scaleX(1.0213);'>5,064.00</span>
<span class="t" style='left:1798.1px;top:397.4px;font:400 21.6px/1 "Liberation Serif", serif;color:#ffffff;transform:scaleX(1.0171);'>5,105.74</span>
<span class="t" style='left:1806.2px;top:749.7px;font:400 18px/1 "Liberation Serif", serif;color:#8d9096;transform:scaleX(1.0347);'>0.07</span>
<span class="t" style='left:1806.2px;top:801.9px;font:400 18px/1 "Liberation Serif", serif;color:#8d9096;transform:scaleX(1.0106);'>0.04</span>
<span class="t" style='left:1806.2px;top:853.7px;font:400 18px/1 "Liberation Serif", serif;color:#8d9096;transform:scaleX(1.0451);'>0.01</span>
<span class="t" style='left:769.1px;top:907.8px;font:400 18px/1 "Liberation Serif", serif;color:#8d9096;transform:scaleX(1.0323);'>14:48</span>
<span class="t" style='left:884.3px;top:907.8px;font:400 18px/1 "Liberation Serif", serif;color:#8d9096;transform:scaleX(1.0305);'>14:56</span>
<span class="t" style='left:999.5px;top:907.8px;font:400 18px/1 "Liberation Serif", serif;color:#8d9096;transform:scaleX(1.0275);'>15:04</span>
<span class="t" style='left:1114.6px;top:907.8px;font:400 18px/1 "Liberation Serif", serif;color:#8d9096;transform:scaleX(1.0526);'>15:12</span>
<span class="t" style='left:1229.9px;top:907.8px;font:400 18px/1 "Liberation Serif", serif;color:#8d9096;transform:scaleX(1.0321);'>15:20</span>
<span class="t" style='left:1345.1px;top:907.8px;font:400 18px/1 "Liberation Serif", serif;color:#8d9096;transform:scaleX(1.0323);'>15:28</span>
<span class="t" style='left:1460.3px;top:907.8px;font:400 18px/1 "Liberation Serif", serif;color:#8d9096;transform:scaleX(1.0305);'>15:36</span>
<span class="t" style='left:1575.5px;top:907.8px;font:400 18px/1 "Liberation Serif", serif;color:#8d9096;transform:scaleX(1.0275);'>15:44</span>
<span class="t" style='left:649.7px;top:968.5px;font:400 23.3px/1 "Liberation Sans", sans-serif;color:#ffffff;transform:scaleX(0.9514);'>Principale</span>
<span class="t" style='left:794.9px;top:968.5px;font:400 23.3px/1 "Liberation Sans", sans-serif;color:#3eb5d6;transform:scaleX(0.9908);'>MA</span>
<span class="t" style='left:879.3px;top:968.5px;font:400 23.3px/1 "Liberation Sans", sans-serif;color:#96989b;transform:scaleX(0.9075);'>EMA</span>
<span class="t" style='left:974.1px;top:968.5px;font:400 23.3px/1 "Liberation Sans", sans-serif;color:#96989b;transform:scaleX(0.8951);'>BOLL</span>
<span class="t" style='left:1127.2px;top:963.5px;font:400 23.3px/1 "Liberation Sans", sans-serif;color:#ffffff;transform:scaleX(0.9299);'>Secondario</span>
<span class="t" style='left:1305.4px;top:964.5px;font:400 23.3px/1 "Liberation Sans", sans-serif;color:#3eb5d6;transform:scaleX(0.8577);'>VOL</span>
<span class="t" style='left:1401.9px;top:964.5px;font:400 23.3px/1 "Liberation Sans", sans-serif;color:#96989b;transform:scaleX(0.9094);'>MACD</span>
<span class="t" style='left:1520.9px;top:964.5px;font:400 23.3px/1 "Liberation Sans", sans-serif;color:#96989b;transform:scaleX(0.9398);'>KDJ</span>
<span class="t" style='left:1617.4px;top:964.5px;font:400 23.3px/1 "Liberation Sans", sans-serif;color:#96989b;transform:scaleX(0.8788);'>RSI</span>
<span class="t" style='left:1707.1px;top:964.5px;font:400 23.3px/1 "Liberation Sans", sans-serif;color:#96989b;transform:scaleX(0.9133);'>BIAS</span>
<span class="t" style='left:1811.0px;top:964.5px;font:400 23.3px/1 "Liberation Sans", sans-serif;color:#96989b;transform:scaleX(0.8792);'>BRAR</span>
<span class="t" style='left:1928.4px;top:52.8px;font:700 20.8px/1 "Liberation Sans", sans-serif;color:#ffffff;transform:scaleX(0.9659);'>Acquista</span>
<span class="t" style='left:1928.8px;top:86.3px;font:400 24.8px/1 "Liberation Sans", sans-serif;color:#3ac595;transform:scaleX(0.9272);'>5,105.83</span>
<span class="t" style='left:2193.7px;top:47.1px;font:700 23px/1 "Liberation Sans", sans-serif;color:#ffffff;transform:scaleX(1.1065);'>9</span>
<span class="t" style='left:2419.1px;top:52.8px;font:700 20.8px/1 "Liberation Sans", sans-serif;color:#ffffff;transform:scaleX(1.0089);'>Vendi</span>
<span class="t" style='left:2383.4px;top:86.3px;font:400 24.8px/1 "Liberation Sans", sans-serif;color:#ee4f49;transform:scaleX(0.9363);'>5,105.74</span>
<span class="t" style='left:1911.8px;top:176.8px;font:400 22.2px/1 "Liberation Sans", sans-serif;color:#ffffff;transform:scaleX(1.0205);'>Mercato</span>
<span class="t" style='left:2021.2px;top:176.8px;font:400 22.2px/1 "Liberation Sans", sans-serif;color:#96989b;transform:scaleX(1.0350);'>Limite</span>
<span class="t" style='left:1912.5px;top:257.4px;font:400 21px/1 "Liberation Sans", sans-serif;color:#c4c5c7;transform:scaleX(1.0300);'>Prezzo</span>
<span class="t" style='left:1930.7px;top:311.5px;font:400 24px/1 "Liberation Sans", sans-serif;color:#5c5d61;transform:scaleX(1.0471);'>Da eseguire al miglior prezzo</span>
<span class="t" style='left:1912.5px;top:379.1px;font:400 22px/1 "Liberation Sans", sans-serif;color:#c4c5c7;transform:scaleX(1.0556);'>Lotti</span>
<span class="t" style='left:1938.8px;top:432.9px;font:400 24.8px/1 "Liberation Sans", sans-serif;color:#c0c1c4;transform:scaleX(1.0211);'>Inserisci la quantità</span>
<span class="t" style='left:2390.1px;top:432.9px;font:400 24.8px/1 "Liberation Sans", sans-serif;color:#c0c1c4;transform:scaleX(1.0853);'>Lotti</span>
<span class="t" style='left:1912.8px;top:514.9px;font:400 22px/1 "Liberation Sans", sans-serif;color:#96989b;transform:scaleX(1.0098);'>Valore</span>
<span class="t" style='left:1957.0px;top:561.7px;font:400 25px/1 "Liberation Sans", sans-serif;color:#ffffff;transform:scaleX(0.9930);'>TP/SL</span>
<span class="t" style='left:2159.4px;top:640.6px;font:400 24px/1 "Liberation Sans", sans-serif;color:#111214;transform:scaleX(1.1162);'>Iscriviti</span>
<span class="t" style='left:2163.2px;top:727.5px;font:400 24px/1 "Liberation Sans", sans-serif;color:#ffffff;transform:scaleX(1.0598);'>Accedi</span>
<svg width="2502" height="1034" viewBox="0 0 2502 1034"><rect x="21.6" y="109.4" width="562" height="63.2" fill="none" stroke="#d42a32" stroke-width="2.1"/><path d="M239.5 216L387.2 491" stroke="#d42a32" stroke-width="2" fill="none"/><path d="M235.5 208L243.8 216.2L239.9 216.9L236.6 219.6Z" fill="#d42a32"/></svg>
</body></html>
